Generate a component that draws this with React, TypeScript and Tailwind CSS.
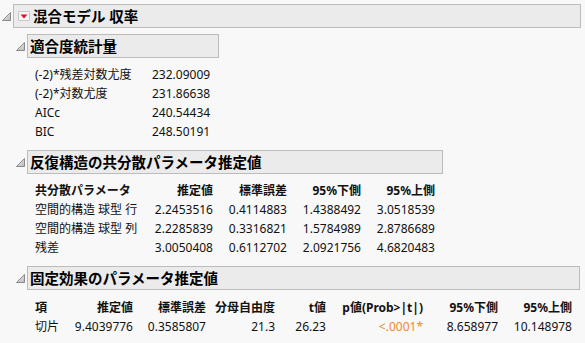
import React from 'react';

const font = { fontFamily: '"Noto Sans", "Noto Sans CJK JP", sans-serif' };

// JMP-style disclosure triangle (open state)
const Disclosure: React.FC = () => (
  <svg width="9" height="9" viewBox="0 0 9 9" className="shrink-0">
    <defs>
      <linearGradient id="tri" x1="0" y1="0" x2="1" y2="1">
        <stop offset="0" stopColor="#f4f4f4" />
        <stop offset="1" stopColor="#b8b8b8" />
      </linearGradient>
    </defs>
    <path d="M0.5 8.5 L8.5 8.5 L8.5 0.5 Z" fill="url(#tri)" stroke="#8a8a8a" strokeWidth="1" strokeLinejoin="round" />
  </svg>
);

const RedMenu: React.FC = () => (
  <span className="inline-flex items-center justify-center w-[12px] h-[10px] border border-[#c8c8c8] bg-[#f6f6f6] rounded-[1px] mr-[3px]">
    <svg width="8" height="5" viewBox="0 0 8 5">
      <path d="M0.5 0.5 L7.5 0.5 L4 4.5 Z" fill="#e0102a" />
    </svg>
  </span>
);

const SectionHead: React.FC<{ title: string; width: string; menu?: boolean }> = ({ title, width, menu }) => (
  <div className="flex items-center gap-[2px]">
    <Disclosure />
    <div className={`${width} h-[24px] flex items-center pl-[2px] bg-[#ebebeb] border border-[#bcbcbc] text-[14.5px] font-bold text-black leading-none`}>
      {menu && <RedMenu />}
      {title}
    </div>
  </div>
);

const fitStats = [
  ['(-2)*残差対数尤度', '232.09009'],
  ['(-2)*対数尤度', '231.86638'],
  ['AICc', '240.54434'],
  ['BIC', '248.50191'],
];

const covRows = [
  ['空間的構造 球型 行', '2.2453516', '0.4114883', '1.4388492', '3.0518539'],
  ['空間的構造 球型 列', '2.2285839', '0.3316821', '1.5784989', '2.8786689'],
  ['残差', '3.0050408', '0.6112702', '2.0921756', '4.6820483'],
];

export default function App() {
  return (
    <div className="w-[585px] h-[343px] bg-[#f8f8f8] text-[12px] text-[#111] overflow-hidden pt-[4px]" style={font}>
      <div className="flex items-center gap-[2px] pl-[2px]">
        <Disclosure />
        <div className="w-[568px] h-[24px] flex items-center pl-[4px] bg-[#ebebeb] border border-[#bcbcbc] text-[14.5px] font-bold text-black leading-none">
          <RedMenu />
          混合モデル 収率
        </div>
      </div>

      <div className="pl-[16px]">
        <div className="mt-[6px]">
          <SectionHead title="適合度統計量" width="w-[192px]" />
          <div className="grid grid-cols-[117px_auto] pl-[19px] pt-[7px] leading-[19px]">
            {fitStats.map(([k, v]) => (
              <React.Fragment key={k}>
                <div>{k}</div>
                <div>{v}</div>
              </React.Fragment>
            ))}
          </div>
        </div>

        <div className="mt-[9px]">
          <SectionHead title="反復構造の共分散パラメータ推定値" width="w-[416px]" />
          <div className="grid grid-cols-[118px_60px_74px_74px_74px] pl-[19px] pt-[7px] leading-[19px]">
            <div className="font-bold">共分散パラメータ</div>
            <div className="font-bold text-right">推定値</div>
            <div className="font-bold text-right">標準誤差</div>
            <div className="font-bold text-right">95%下側</div>
            <div className="font-bold text-right">95%上側</div>
            {covRows.map((r) => (
              <React.Fragment key={r[0]}>
                <div>{r[0]}</div>
                <div className="text-right">{r[1]}</div>
                <div className="text-right">{r[2]}</div>
                <div className="text-right">{r[3]}</div>
                <div className="text-right">{r[4]}</div>
              </React.Fragment>
            ))}
          </div>
        </div>

        <div className="mt-[9px]">
          <SectionHead title="固定効果のパラメータ推定値" width="w-[553px]" />
          <div className="grid grid-cols-[38px_60px_73px_69px_51px_97px_75px_74px] pl-[19px] pt-[8px] leading-[19px]">
            <div className="font-bold">項</div>
            <div className="font-bold text-right">推定値</div>
            <div className="font-bold text-right">標準誤差</div>
            <div className="font-bold text-right">分母自由度</div>
            <div className="font-bold text-right">t値</div>
            <div className="font-bold text-right">p値(Prob&gt;|t|)</div>
            <div className="font-bold text-right">95%下側</div>
            <div className="font-bold text-right">95%上側</div>
            <div>切片</div>
            <div className="text-right">9.4039776</div>
            <div className="text-right">0.3585807</div>
            <div className="text-right">21.3</div>
            <div className="text-right">26.23</div>
            <div className="text-right text-[#f08a2c]">&lt;.0001*</div>
            <div className="text-right">8.658977</div>
            <div className="text-right">10.148978</div>
          </div>
        </div>
      </div>
    </div>
  );
}
